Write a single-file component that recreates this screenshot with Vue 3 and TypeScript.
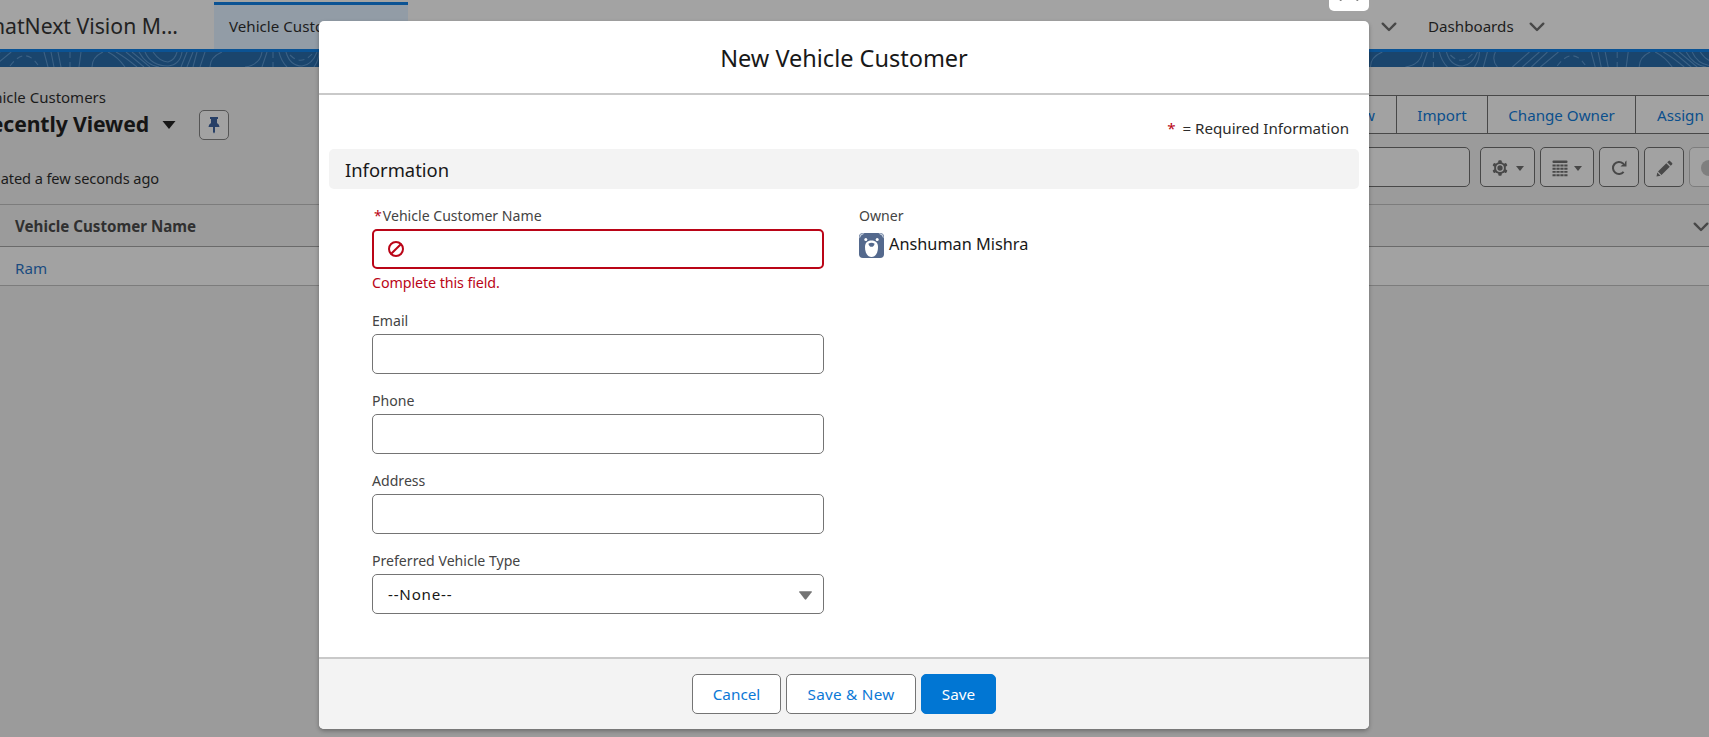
<script setup lang="ts">
interface Field {
  label: string
  kind: 'text' | 'select'
}

const hiddenTabs = [
  { label: 'Vehicle Dealers', width: 171 },
  { label: 'Vehicle Orders', width: 167 },
  { label: 'Vehicle Service Requests', width: 235 },
  { label: 'Vehicle Test Drives', width: 194 },
  { label: 'Vehicles', width: 116 },
  { label: 'Reports', width: 122 },
  { label: 'Dashboards', width: 148 },
]

const fields: Field[] = [
  { label: 'Email', kind: 'text' },
  { label: 'Phone', kind: 'text' },
  { label: 'Address', kind: 'text' },
  { label: 'Preferred Vehicle Type', kind: 'select' },
]

const tiles = [-1, 0, 1, 2, 3, 4]
const contours =
  'M44 0L48 15M51 0L54 15M58 0L61 15M81 0L79 15M103 0Q92 5 92 15M108 0Q118 5 125 15M116 0Q125 5 137 15M126 0L144 15M132 0L150 15M139 0Q146 13 159 15M145 0Q151 14 168 14Q180 13 182 0M153 0Q160 10 168 10Q175 8 177 0M187 0L181 15M193 0L187 15M197 0L193 15M205 0L200 15M222 0Q210 5 210 15M262 0Q260 13 245 15M267 0L262 15M279 0Q281 9 287 15M286 0Q290 14 302 14Q312 13 317 0M319 0Q319 8 314 15M327 0L323 15M335 0Q331 8 337 15M352 15L369 0M362 15L379 0M371 15L387 0M380 15L398 0'
const dashedContours = 'M10 14Q25 -6 38 13M70 0L70 15M273 0L273 15M290 3Q301 14 312 2'
</script>

<template>
  <div class="page">
    <nav class="nav">
      <div class="app-name"><span>WhatNext Vision M...</span></div>
      <div class="tab active"><span>Vehicle Customers</span></div>
      <div v-for="t in hiddenTabs" :key="t.label" class="tab" :style="{ width: t.width + 'px' }">
        <span>{{ t.label }}</span>
        <svg class="chev" width="16" height="10" viewBox="0 0 16 10"><path d="M1.7 1.7L8 8L14.3 1.7" /></svg>
      </div>
    </nav>
    <svg class="band" width="1709" height="15" viewBox="0 0 1709 15">
      <g v-for="n in tiles" :key="n" :transform="`translate(${n * 386.8} 0)`">
        <path :d="contours" />
        <path :d="dashedContours" stroke-dasharray="6 4" />
      </g>
    </svg>

    <header class="list-head">
      <div class="list-left">
        <div class="crumb"><span>Vehicle Customers</span></div>
        <div class="view-row">
          <div class="view-name"><span>Recently Viewed</span></div>
          <svg class="caret" width="14" height="8" viewBox="0 0 14 8"><path d="M0.5 0H13.5L7 8Z" fill="#171717" /></svg>
          <div class="pin">
            <svg width="12" height="18" viewBox="0 0 12 18"><path d="M2 1H10V3H9V7Q11.5 8.500 11.500 11H7V16L6 17.500L5 16V11H0.500Q0.500 8.500 3 7V3H2Z" fill="#273f66" /></svg>
          </div>
        </div>
        <div class="updated"><span>Updated a few seconds ago</span></div>
      </div>
      <div class="list-right">
        <div class="group">
          <div class="gbtn new">New</div>
          <div class="gbtn import">Import</div>
          <div class="gbtn owner-btn">Change Owner</div>
          <div class="gbtn assign">Assign</div>
        </div>
        <div class="tools">
          <div class="search"></div>
          <div class="tool w55">
            <svg width="16" height="16" viewBox="0 0 16 16">
              <g fill="#484848">
                <circle cx="8" cy="8" r="5.900" />
                <g v-for="a in [0, 60, 120, 180, 240, 300]" :key="a" :transform="`rotate(${a} 8 8)`"><rect x="6.300" y="0.200" width="3.400" height="4" rx="1" /></g>
              </g>
              <circle cx="8" cy="8" r="3.300" fill="none" stroke="#a2a2a2" stroke-width="1.300" />
            </svg>
            <svg width="8" height="5" viewBox="0 0 8 5"><path d="M0 0H8L4 5Z" fill="#484848" /></svg>
          </div>
          <div class="tool w54">
            <svg width="16" height="17" viewBox="0 0 16 17">
              <rect x="0.500" y="0.500" width="15" height="2.500" rx="1" fill="#484848" />
              <path d="M0.500 5.500H15.500M0.500 8.700H15.500M0.500 11.900H15.500M0.500 15.300H15.500" stroke="#484848" stroke-width="1.900" stroke-dasharray="3.200 0.730" />
            </svg>
            <svg width="8" height="5" viewBox="0 0 8 5"><path d="M0 0H8L4 5Z" fill="#484848" /></svg>
          </div>
          <div class="tool w40">
            <svg width="16" height="16" viewBox="0 0 16 16">
              <path d="M12.600 11.800A6 6 0 1 1 12 3.500L13.800 5.200" fill="none" stroke="#484848" stroke-width="2" />
              <path d="M15.500 0.500V6.500H9.500L11 5H14V2Z" fill="#484848" />
            </svg>
          </div>
          <div class="tool w40">
            <svg width="17" height="17" viewBox="0 0 17 17">
              <path d="M10.300 3.200L13.800 6.700L5.500 15L2 11.500ZM11.200 2.300L12.600 0.900Q13.300 0.300 14 0.900L16.100 3Q16.700 3.700 16.100 4.400L14.700 5.800ZM1.300 12.500L4.500 15.700L0.500 16.500Z" fill="#484848" />
            </svg>
          </div>
          <div class="tool w40 faded">
            <svg width="16" height="16" viewBox="0 0 16 16"><circle cx="8" cy="8" r="8" fill="#7f7f7f" /><path d="M8 8V1A7 7 0 0 1 15 8Z" fill="#a2a2a2" /></svg>
          </div>
        </div>
      </div>
    </header>

    <div class="thead">
      <span>Vehicle Customer Name</span>
      <svg class="chev" width="16" height="10" viewBox="0 0 16 10"><path d="M1.700 1.700L8 8L14.300 1.700" /></svg>
    </div>
    <div class="trow">Ram</div>

    <div class="close">
      <svg width="20" height="20" viewBox="0 0 20 20"><path d="M1.700 1.700L18.300 18.300M18.300 1.700L1.700 18.300" stroke="#747474" stroke-width="3" stroke-linecap="round" /></svg>
    </div>

    <section class="modal">
      <h2 class="modal-title"><span>New Vehicle Customer</span></h2>
      <div class="modal-body">
        <div class="req"><b>*</b><span>= Required Information</span></div>
        <h3 class="section"><span>Information</span></h3>
        <div class="form">
          <div class="col">
            <div class="field">
              <label class="label must"><b>*</b><span>Vehicle Customer Name</span></label>
              <div class="input error">
                <svg width="16" height="16" viewBox="0 0 16 16"><circle cx="8" cy="8" r="7" /><path d="M3.200 12.800L12.800 3.200" /></svg>
              </div>
              <div class="help">Complete this field.</div>
            </div>
            <div v-for="f in fields" :key="f.label" class="field">
              <label class="label">{{ f.label }}</label>
              <div class="input">
                <template v-if="f.kind === 'select'">
                  <span class="value">--None--</span>
                  <svg class="arrow" width="13" height="9" viewBox="0 0 12 8"><path d="M0.700 0H11.300Q12.300 0 11.700 0.900L6.700 7.500Q6 8.300 5.300 7.500L0.300 0.900Q-0.300 0 0.700 0Z" fill="#747474" /></svg>
                </template>
              </div>
            </div>
          </div>
          <div class="col">
            <label class="label">Owner</label>
            <div class="owner">
              <svg width="25" height="25" viewBox="0 0 25 25">
                <rect width="25" height="25" rx="4" fill="#54698d" />
                <path d="M0.300 5.500Q0 0 5.500 0.300L4 1.500Q1.500 2 1.500 4ZM24.700 5.500Q25 0 19.500 0.300L21 1.500Q23.500 2 23.500 4Z" fill="#c5cfdd" />
                <circle cx="6.800" cy="6.600" r="1.500" fill="#fff" />
                <circle cx="18.200" cy="6.600" r="1.500" fill="#fff" />
                <path d="M12.500 7.600C16.600 7.600 19 10 19 14C19 20 16.500 24 12.500 24C8.500 24 6 20 6 14C6 10 8.400 7.600 12.500 7.600Z" fill="#fff" />
                <path d="M9.400 10.700Q12.500 8.600 15.600 10.700Q15 13.800 12.500 13.800Q10 13.800 9.400 10.700Z" fill="#54698d" />
              </svg>
              <span>Anshuman Mishra</span>
            </div>
          </div>
        </div>
      </div>
      <footer class="modal-foot">
        <button class="btn cancel">Cancel</button>
        <button class="btn save-new">Save &amp; New</button>
        <button class="btn primary">Save</button>
      </footer>
    </section>
  </div>
</template>

<style>
body {
  margin: 0;
}
</style>

<style scoped>
* {
  box-sizing: border-box;
}
.page {
  position: relative;
  width: 1709px;
  height: 737px;
  overflow: hidden;
  background: #9b9b9b;
  font-family: 'Noto Sans', 'Open Sans', sans-serif;
  font-size: 15.15px;
  line-height: 20px;
  color: #1b1b1b;
  white-space: nowrap;
}
svg {
  display: block;
  flex: none;
}
.nav {
  display: flex;
  height: 52px;
  background: #a3a3a3;
  border-bottom: 3px solid #0b5394;
}
.app-name {
  width: 178px;
  margin-right: 36px;
  padding-top: 2px;
  display: flex;
  justify-content: flex-end;
  align-items: center;
  overflow: hidden;
  font-size: 21.2px;
  color: #222;
}
.tab {
  flex: none;
  display: flex;
  align-items: center;
  gap: 15px;
  padding: 5px 0 0 15px;
  color: #1d1d1d;
}
.tab > span {
  margin-top: -2px;
}
.tab:nth-child(8) {
  gap: 20px;
}
.tab.active {
  width: 194px;
  margin-top: 2px;
  padding-top: 0;
  border-top: 3px solid #0b5394;
  background: #929ca6;
}
.chev {
  fill: none;
  stroke: #484848;
  stroke-width: 2.4;
  stroke-linecap: round;
  stroke-linejoin: round;
}
.band {
  background: #1a456d;
  fill: none;
  stroke: #3b6185;
  stroke-width: 1.1;
}
.list-head {
  display: flex;
  height: 137px;
  justify-content: space-between;
}
.list-left {
  padding-top: 20px;
}
.crumb,
.view-name,
.updated {
  display: flex;
  justify-content: flex-end;
  overflow: hidden;
}
.crumb {
  width: 106px;
  font-size: 15px;
}
.view-row {
  display: flex;
  align-items: center;
  height: 30px;
  margin-top: 3px;
}
.view-name {
  width: 149px;
  height: 30px;
  line-height: 28px;
  font-size: 21.2px;
  font-weight: 700;
  letter-spacing: -0.1px;
  color: #151515;
}
.caret {
  margin: 0 23px 0 13px;
}
.pin {
  display: flex;
  width: 30px;
  height: 30px;
  border: 1px solid #555;
  border-radius: 5px;
  background: #a2a2a2;
  align-items: center;
  justify-content: center;
}
.updated {
  width: 159px;
  margin-top: 28px;
  font-size: 14.6px;
  letter-spacing: -0.1px;
}
.list-right {
  width: 388px;
  padding-top: 28px;
}
.group {
  display: flex;
  height: 39px;
}
.gbtn {
  flex: none;
  border: 1px solid #484848;
  border-left: 0;
  background: #a2a2a2;
  color: #0b4f8c;
  line-height: 38px;
  text-align: center;
}
.new {
  width: 76px;
  text-align: right;
  padding-right: 21px;
}
.import {
  width: 91px;
}
.owner-btn {
  width: 148px;
}
.assign {
  width: 130px;
  text-align: left;
  padding-left: 21px;
}
.tools {
  display: flex;
  gap: 5px;
  margin-top: 13px;
}
.search {
  flex: none;
  width: 149px;
  height: 40px;
  margin-right: 5px;
  border: 1px solid #484848;
  border-radius: 5px;
  background: #a2a2a2;
}
.tool {
  flex: none;
  display: flex;
  gap: 8px;
  height: 40px;
  align-items: center;
  justify-content: center;
  padding-top: 2px;
  border: 1px solid #484848;
  border-radius: 5px;
  background: #a2a2a2;
}
.w55 {
  width: 55px;
}
.w54 {
  width: 54px;
  gap: 6px;
}
.w40 {
  width: 40px;
}
.faded {
  border-color: #7d7d7d;
}
.thead {
  display: flex;
  align-items: center;
  justify-content: space-between;
  height: 43px;
  padding: 3px 0 0 15px;
  border-top: 1px solid #7c7c7c;
  border-bottom: 1px solid #6a6a6a;
  font-weight: 700;
  color: #303030;
}
.thead > span {
  margin-top: -2px;
}
.trow {
  height: 39px;
  padding-left: 15px;
  line-height: 43px;
  border-bottom: 1px solid #7c7c7c;
  background: #a2a2a2;
  color: #1a4c80;
}
.close {
  position: absolute;
  left: 1329px;
  top: -29px;
  display: flex;
  width: 40px;
  height: 40px;
  align-items: center;
  justify-content: center;
  border-radius: 5px;
  background: #fff;
}
.modal {
  position: absolute;
  left: 319px;
  top: 21px;
  display: flex;
  flex-direction: column;
  width: 1050px;
  height: 708px;
  border-radius: 5px;
  overflow: hidden;
  background: #fff;
  color: #181818;
  box-shadow: 0 2px 4px rgba(0, 0, 0, 0.3);
}
.modal-title {
  margin: 0;
  height: 74px;
  border-bottom: 2px solid #c9c9c9;
  text-align: center;
  font-size: 23.5px;
  font-weight: 400;
  line-height: 75px;
}
.modal-body {
  flex: 1;
  padding: 23px 10px 0;
}
.req {
  display: flex;
  justify-content: flex-end;
  gap: 7px;
  height: 31px;
  padding-right: 10px;
  color: #2c2c2c;
}
.req b,
.must b {
  font-weight: 400;
  color: #ba0517;
}
.section {
  margin: 0;
  height: 40px;
  padding-left: 16px;
  border-radius: 5px;
  background: #f3f3f3;
  font-size: 18.4px;
  font-weight: 400;
  line-height: 42px;
}
.form {
  display: grid;
  grid-template-columns: 452px 446px;
  column-gap: 35px;
  padding: 17px 0 0 43px;
}
.label {
  display: block;
  height: 23px;
  font-size: 14.1px;
  line-height: 20px;
  color: #444;
}
.must {
  display: flex;
  gap: 1px;
  padding-left: 2px;
}
.field {
  margin-bottom: 17px;
}
.input {
  display: flex;
  align-items: center;
  justify-content: space-between;
  height: 40px;
  padding: 0 11px 0 15px;
  border: 1px solid #747474;
  border-radius: 5px;
}
.value {
  letter-spacing: 0.8px;
}
.arrow {
  margin-top: 3px;
}
.input.error {
  padding-left: 14px;
  border: 2px solid #ba0517;
}
.error svg {
  fill: none;
  stroke: #ba0517;
  stroke-width: 2;
}
.help {
  height: 25px;
  padding-top: 4px;
  color: #ba0517;
  font-size: 14.3px;
  letter-spacing: -0.1px;
}
.owner {
  display: flex;
  gap: 5px;
  margin-top: 4px;
  font-size: 16.3px;
  line-height: 23px;
}
.modal-foot {
  display: flex;
  justify-content: center;
  gap: 5px;
  height: 72px;
  padding-top: 15px;
  border-top: 2px solid #c9c9c9;
  background: #f3f3f3;
}
.btn {
  height: 40px;
  padding: 0;
  border: 1px solid #747474;
  border-radius: 5px;
  background: #fff;
  color: #0b78d6;
  font: 15.3px/38px 'Noto Sans', 'Open Sans', sans-serif;
}
.cancel {
  width: 89px;
}
.save-new {
  width: 130px;
  letter-spacing: 0.25px;
}
.primary {
  width: 75px;
  border-color: #0176d3;
  background: #0176d3;
  color: #fff;
}
</style>
